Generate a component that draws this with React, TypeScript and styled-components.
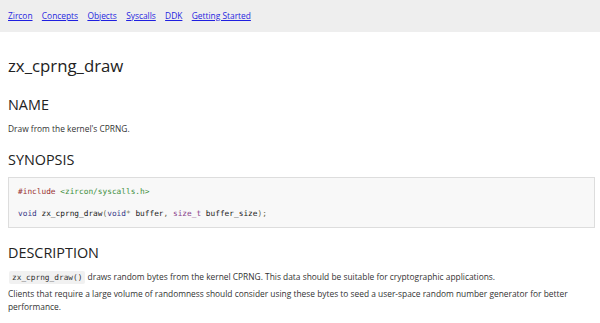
import styled, { createGlobalStyle } from 'styled-components';

const GlobalStyle = createGlobalStyle`
  html, body {
    margin: 0;
    padding: 0;
    background: #fff;
  }
  body {
    font-family: 'Open Sans', 'Liberation Sans', sans-serif;
    color: #333;
  }
`;

const navLinks = ['Zircon', 'Concepts', 'Objects', 'Syscalls', 'DDK', 'Getting Started'];

function App() {
  return (
    <>
      <GlobalStyle />
      <Nav>
        {navLinks.map((l) => (
          <NavLink key={l} href='#'>
            {l}
          </NavLink>
        ))}
      </Nav>
      <Main>
        <Title>zx_cprng_draw</Title>

        <Heading>NAME</Heading>
        <Para>Draw from the kernel's CPRNG.</Para>

        <Heading>SYNOPSIS</Heading>
        <CodeBlock>
          <Tok $c='com'>#include</Tok> <Tok $c='str'>&lt;zircon/syscalls.h&gt;</Tok>
          {'\n\n'}
          <Tok $c='kwd'>void</Tok> zx_cprng_draw<Tok $c='pun'>(</Tok>
          <Tok $c='kwd'>void</Tok>
          <Tok $c='pun'>*</Tok> buffer<Tok $c='pun'>,</Tok> <Tok $c='typ'>size_t</Tok>{' '}
          buffer_size<Tok $c='pun'>);</Tok>
        </CodeBlock>

        <Heading>DESCRIPTION</Heading>
        <Para>
          <InlineCode>zx_cprng_draw()</InlineCode> draws random bytes from the kernel
          CPRNG. This data should be suitable for cryptographic applications.
        </Para>
        <Para>
          Clients that require a large volume of randomness should consider using these
          bytes to seed a user-space random number generator for better performance.
        </Para>
      </Main>
    </>
  );
}

export default App;

const tokenColors: Record<string, string> = {
  com: '#993333',
  str: '#3f8f3f',
  kwd: '#3a3a88',
  typ: '#8a3f8a',
  pun: '#6a6a4a',
};

const Nav = styled.nav`
  display: flex;
  align-items: center;
  gap: 9.3px;
  height: 32px;
  padding: 0 8px;
  background-color: #eeeeee;
`;

const NavLink = styled.a`
  font-size: 8.4px;
  line-height: 12.6px;
  color: #1f1fe0;
  text-decoration: underline;
`;

const Main = styled.main`
  padding: 0 5px 0 8px;
`;

const Title = styled.h1`
  margin: 24.4px 0 19px;
  font-size: 16.8px;
  line-height: 20.16px;
  font-weight: 400;
  color: #222;
`;

const Heading = styled.h2`
  margin: 16px 0 9px;
  font-size: 14.4px;
  line-height: 17.28px;
  font-weight: 400;
  color: #222;
`;

const Para = styled.p`
  margin: 0 0 3px;
  font-size: 8.4px;
  line-height: 13px;
  color: #333;
`;

const CodeBlock = styled.pre`
  margin: 0;
  padding: 8px 9px;
  border: 1px solid #dddddd;
  background-color: #f8f8f8;
  font-family: 'DejaVu Sans Mono', 'Liberation Mono', monospace;
  font-size: 7.8px;
  line-height: 11px;
  color: #222;
  white-space: pre;
`;

const Tok = styled.span<{ $c: string }>`
  color: ${(p) => tokenColors[p.$c]};
`;

const InlineCode = styled.code`
  margin-left: 1px;
  padding: 2px 3px;
  border-radius: 2px;
  background-color: #f1f1f1;
  font-family: 'DejaVu Sans Mono', 'Liberation Mono', monospace;
  font-size: 7.8px;
  color: #333;
`;
